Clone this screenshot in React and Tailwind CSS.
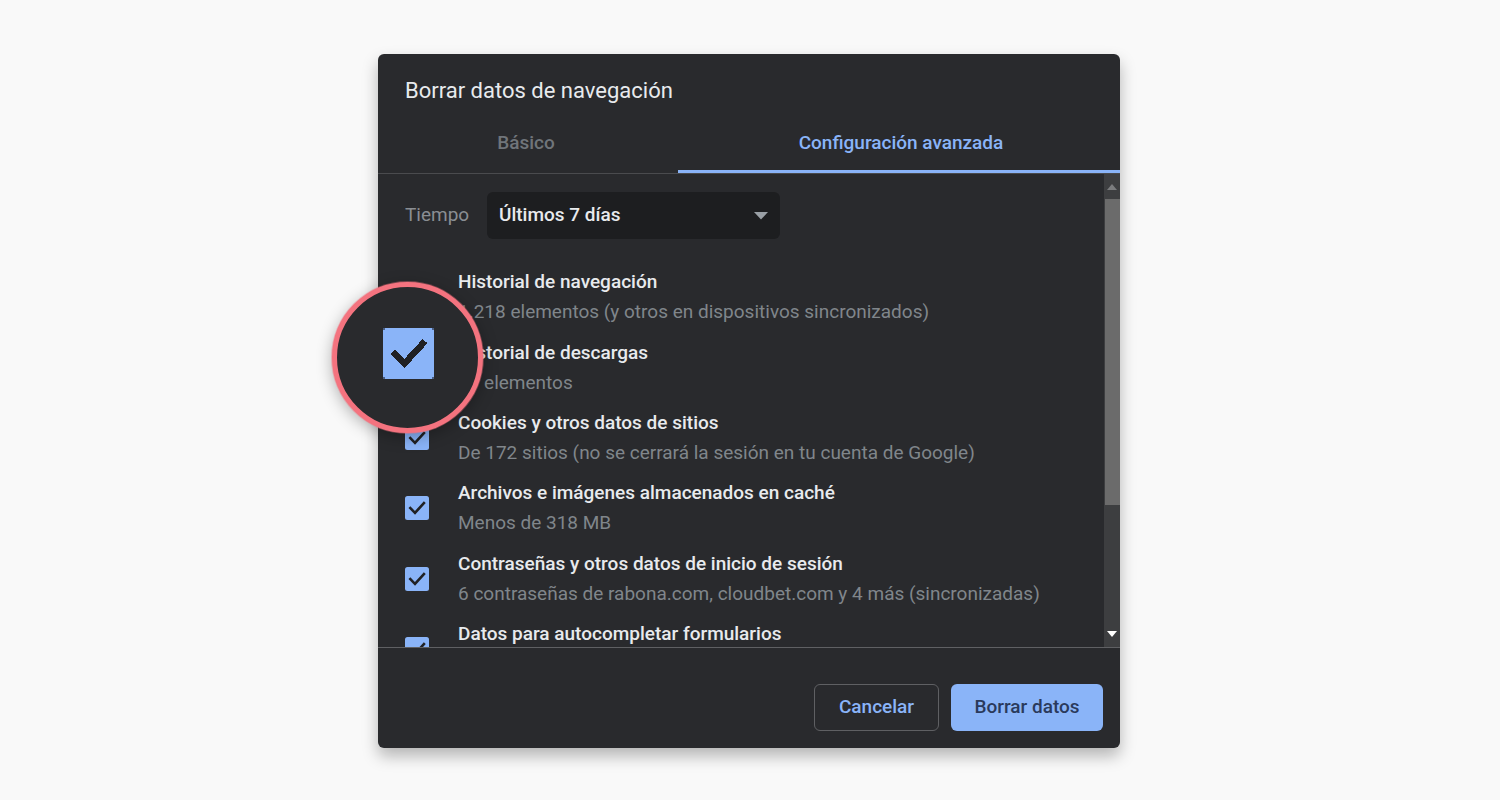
const rows = [
  ["Historial de navegación", "1.218 elementos (y otros en dispositivos sincronizados)"],
  ["Historial de descargas", "17 elementos"],
  ["Cookies y otros datos de sitios", "De 172 sitios (no se cerrará la sesión en tu cuenta de Google)"],
  ["Archivos e imágenes almacenados en caché", "Menos de 318 MB"],
  ["Contraseñas y otros datos de inicio de sesión", "6 contraseñas de rabona.com, cloudbet.com y 4 más (sincronizadas)"],
  ["Datos para autocompletar formularios", ""],
];

function Check({ big }) {
  return (
    <svg viewBox="0 0 24 24" className={big ? "w-[51px] h-[51px] block" : "w-6 h-6 block"} shapeRendering={big ? "crispEdges" : undefined}>
      <rect x="0" y="0" width="24" height="24" rx={big ? 0 : 2.5} fill="#8ab4f8" />
      {big && <path d="M0 0h1v1H0z M23 0h1v1h-1z M0 23h1v1H0z M23 23h1v1h-1z" fill="#4a5f85" />}
      <path d="M4.4 11.2 L10 16.8 L19.8 6.2" fill="none" stroke="#202124" strokeWidth={big ? 3 : 2.6} />
    </svg>
  );
}

export default function App() {
  return (
    <div className="relative w-[1500px] h-[800px] bg-[#f9f9f9] overflow-hidden flex justify-center pt-[54px] font-['Roboto',sans-serif]">
      <div className="relative left-[-1px] w-[742px] h-[694px] bg-[#292a2d] rounded-md shadow-[0_8px_16px_rgba(0,0,0,0.28)] flex flex-col">
        <div className="h-[72px] pl-[27px] pt-[24px] text-[22px] leading-[26px] text-[#e8eaed] shrink-0">Borrar datos de navegación</div>
        <div className="h-[48px] flex border-b border-[#4a4b4e] shrink-0 text-[19px] font-medium">
          <div className="w-[300px] flex items-start pt-[3px] justify-center text-[#70757a] pr-1">Básico</div>
          <div className="flex-1 flex items-start pt-[3px] justify-center text-[#8ab4f8] border-b-[3px] border-[#8ab4f8] h-[47px] pl-1">Configuración avanzada</div>
        </div>
        <div className="flex-1 min-h-0 flex border-b border-[#5f6063]">
          <div className="flex-1 min-w-0 overflow-hidden pl-[27px] pt-[18px]">
            <div className="flex items-center h-[47px]">
              <span className="w-[82px] text-[19px] text-[#8a8e93]">Tiempo</span>
              <div className="w-[293px] h-[47px] rounded-md bg-[#1d1e20] flex items-center justify-between pl-3 pr-3 text-[19px] font-medium text-[#e8eaed]">
                <span>Últimos 7 días</span>
                <svg viewBox="0 0 14 8" className="w-[14px] h-2"><path d="M0 0 H14 L7 7.5 Z" fill="#9aa0a6" /></svg>
              </div>
            </div>
            <div className="mt-[23px] flex flex-col">
              {rows.map(([t, s]) => (
                <div key={t} className="h-[70.4px] flex items-center shrink-0">
                  <Check />
                  <div className="ml-[29px] whitespace-nowrap h-[58px]">
                    <div className="text-[19px] leading-[27px] font-medium text-[#e8eaed]">{t}</div>
                    <div className="mt-px text-[19px] leading-[31px] text-[#80868b] h-[31px]">{s}</div>
                  </div>
                </div>
              ))}
            </div>
          </div>
          <div className="w-4 shrink-0 bg-[#3d3e40] flex flex-col items-center">
            <div className="h-[25px] w-full flex items-center justify-center">
              <svg viewBox="0 0 10 6" className="w-[10px] h-[6px]"><path d="M5 0 L10 6 H0 Z" fill="#7b7c7e" /></svg>
            </div>
            <div className="h-[306px] w-[15px] ml-px bg-[#6b6b6b]" />
            <div className="flex-1 flex items-end pb-[10px]">
              <svg viewBox="0 0 10 6" className="w-[10px] h-[6px]"><path d="M0 0 H10 L5 6 Z" fill="#ffffff" /></svg>
            </div>
          </div>
        </div>
        <div className="h-[100px] shrink-0 flex justify-end items-start pt-[36px] pr-[17px] gap-3 text-[19px] font-medium">
          <button className="w-[125px] h-[47px] rounded-md border border-[#5f6063] text-[#8ab4f8]">Cancelar</button>
          <button className="w-[152px] h-[47px] rounded-md bg-[#8ab4f8] text-[#2a3a5c]">Borrar datos</button>
        </div>
      </div>
      <div className="absolute left-[332px] top-[282px] w-[151px] h-[151px] rounded-full bg-[#292a2d] border-[5px] border-[#f4737f] shadow-[0_0_0_1px_rgba(244,115,127,0.4),0_4px_16px_rgba(0,0,0,0.3)] flex items-center justify-center">
        <div className="mb-[8px] ml-[1px]"><Check big /></div>
      </div>
    </div>
  );
}
